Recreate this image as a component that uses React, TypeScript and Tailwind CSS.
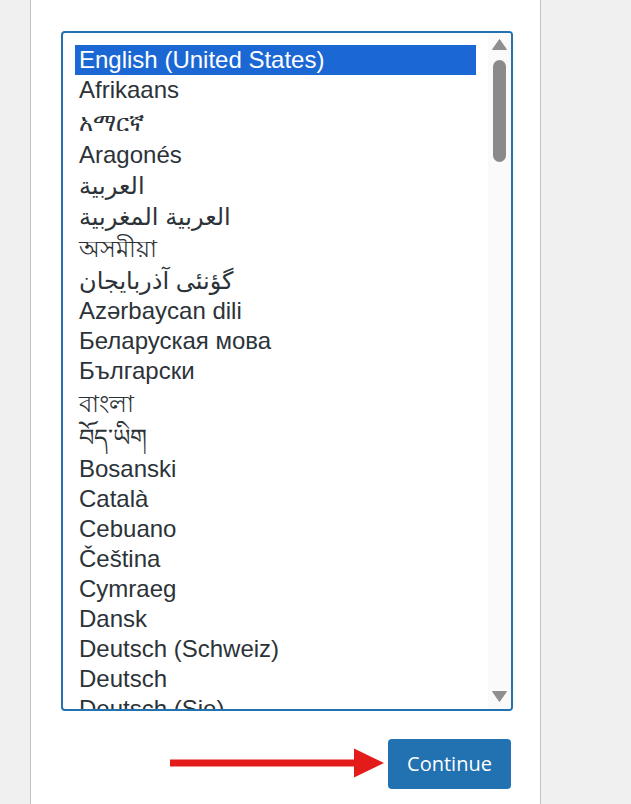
import React from 'react';

type Lang = { label: string; h: string };

// row heights follow the reference: non-latin scripts get taller rows
const languages: Lang[] = [
    { label: 'English (United States)', h: 'h-[30px]' },
    { label: 'Afrikaans', h: 'h-[30px]' },
    { label: 'አማርኛ', h: 'h-[35px]' },
    { label: 'Aragonés', h: 'h-[30px]' },
    { label: 'العربية', h: 'h-[31px]' },
    { label: 'العربية المغربية', h: 'h-[32px]' },
    { label: 'অসমীয়া', h: 'h-[32px]' },
    { label: 'گؤنئی آذربایجان', h: 'h-[31px]' },
    { label: 'Azərbaycan dili', h: 'h-[30px]' },
    { label: 'Беларуская мова', h: 'h-[30px]' },
    { label: 'Български', h: 'h-[30px]' },
    { label: 'বাংলা', h: 'h-[35px]' },
    { label: 'བོད་ཡིག', h: 'h-[33px]' },
    { label: 'Bosanski', h: 'h-[30px]' },
    { label: 'Català', h: 'h-[30px]' },
    { label: 'Cebuano', h: 'h-[30px]' },
    { label: 'Čeština', h: 'h-[30px]' },
    { label: 'Cymraeg', h: 'h-[30px]' },
    { label: 'Dansk', h: 'h-[30px]' },
    { label: 'Deutsch (Schweiz)', h: 'h-[30px]' },
    { label: 'Deutsch', h: 'h-[30px]' },
    { label: 'Deutsch (Sie)', h: 'h-[30px]' },
];

const LanguageList: React.FC = () => {
    const selected = 0;
    return (
        <div className="h-[680px] border-2 border-[#2271b1] rounded-[4px] flex overflow-hidden bg-white">
            {/* Options */}
            <div className="flex-1 pl-[12px] pr-[12px] pt-[12px] overflow-hidden">
                {languages.map((lang, i) => (
                    <div
                        key={lang.label}
                        className={
                            (i === selected ? 'bg-[#1b68d4] text-white ' : 'text-[#2c3338] ') +
                            lang.h +
                            ' flex items-center pl-[4px] pr-[2px] text-[24px] leading-[30px] whitespace-nowrap overflow-hidden'
                        }
                    >
                        {lang.label}
                    </div>
                ))}
            </div>

            {/* Scrollbar */}
            <div className="w-[23px] bg-[#fafafa] flex flex-col items-center">
                <svg width="15" height="11" viewBox="0 0 15 11" className="mt-[6px] ml-[-1px]">
                    <path d="M7.5 0.5 L14.5 10.5 L0.5 10.5 Z" fill="#8f8f8f" strokeLinejoin="round" stroke="#8f8f8f" strokeWidth="1" />
                </svg>
                <div className="mt-[10px] ml-[-1px] w-[13px] h-[102px] rounded-full bg-[#8a8a8a]" />
                <div className="flex-1" />
                <svg width="15" height="11" viewBox="0 0 15 11" className="mb-[7px] ml-[-1px]">
                    <path d="M0.5 0.5 L14.5 0.5 L7.5 10.5 Z" fill="#8f8f8f" strokeLinejoin="round" stroke="#8f8f8f" strokeWidth="1" />
                </svg>
            </div>
        </div>
    );
};

const App: React.FC = () => {
    return (
        <div
            className="min-h-[804px] h-[804px] overflow-hidden bg-[#f0f0f1]"
            style={{ fontFamily: '"Liberation Sans", "DejaVu Sans", "Noto Sans", sans-serif' }}
        >
            <div className="ml-[30px] w-[511px] h-full bg-white border-x border-[#c3c4c7] pt-[31px] pl-[30px]">
                <div className="w-[452px]">
                    <LanguageList />

                    <div className="mt-[28px] flex items-center justify-end gap-[3px] pr-[2px]">
                        <svg width="215" height="30" viewBox="0 0 215 30" className="mt-[-2px]">
                            <rect x="0" y="11.5" width="186" height="7" fill="#e31b1b" />
                            <path d="M184 0.5 L214 15 L184 29.5 Z" fill="#e31b1b" />
                        </svg>
                        <button
                            className="w-[123px] h-[50px] rounded-[4px] bg-[#2271b1] text-white text-[20px]"
                            style={{ fontFamily: '"Open Sans", "Noto Sans", sans-serif' }}
                        >
                            Continue
                        </button>
                    </div>
                </div>
            </div>
        </div>
    );
};

export default App;
